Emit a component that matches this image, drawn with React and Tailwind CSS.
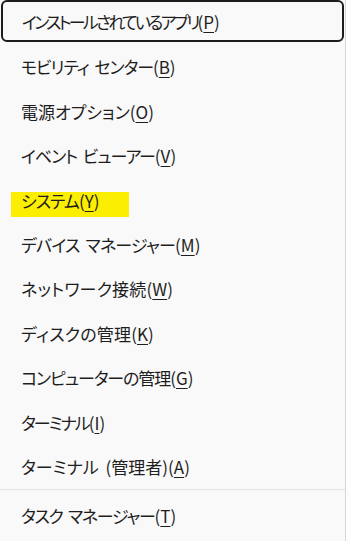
import React from 'react';

const items = [
  { label: 'インストールされているアプリ', key: 'P', focused: true, tracking: 'tracking-[-2.8px]' },
  { label: 'モビリティ センター', key: 'B', tracking: 'tracking-[-1.1px]' },
  { label: '電源オプション', key: 'O', tracking: 'tracking-normal' },
  { label: 'イベント ビューアー', key: 'V', tracking: 'tracking-[-1.1px]' },
  { label: 'システム', key: 'Y', marked: true, tracking: 'tracking-[-1px]' },
  { label: 'デバイス マネージャー', key: 'M', tracking: 'tracking-[-0.8px]' },
  { label: 'ネットワーク接続', key: 'W', tracking: 'tracking-[0.2px]' },
  { label: 'ディスクの管理', key: 'K', tracking: 'tracking-[0.2px]' },
  { label: 'コンピューターの管理', key: 'G', tracking: 'tracking-[-1.1px]' },
  { label: 'ターミナル', key: 'I', tracking: 'tracking-[-2px]' },
  { label: 'ターミナル (管理者)', key: 'A', tracking: 'tracking-normal' },
];

const Label = ({ label, hotkey, tracking }) => (
  <span className="relative whitespace-nowrap [word-spacing:3px]">
    <span className={tracking}>{label}</span>
    (<span className="underline decoration-1 underline-offset-[3px]">{hotkey}</span>)
  </span>
);

const MenuItem = ({ item }) => {
  if (item.focused) {
    return (
      <div className="h-[44.5px] pl-[1px] pr-[1px]">
        <div className="h-[42px] flex items-center pl-[19px] border-2 border-[#1c1c1c] rounded-[6px]">
          <Label label={item.label} hotkey={item.key} tracking={item.tracking} />
        </div>
      </div>
    );
  }

  return (
    <div className="relative h-[44.5px] flex items-center pl-[21px]">
      {item.marked && (
        <span className="absolute left-[11px] top-[14px] w-[118px] h-[25px] bg-[#fcee00]" />
      )}
      <Label label={item.label} hotkey={item.key} tracking={item.tracking} />
    </div>
  );
};

export default function App() {
  return (
    <div
      className="flex w-[350px] h-[541px] overflow-hidden bg-white text-[17px] leading-none text-[#1e1e1e] [font-feature-settings:'palt']"
      style={{ fontFamily: '"Noto Sans CJK JP", "Noto Sans", sans-serif' }}
    >
      <div className="w-[346px] h-full bg-[#f9f9f9] border-r border-[#d6d6d6] flex flex-col">
        {items.map((item) => (
          <MenuItem key={item.key} item={item} />
        ))}
        <div className="h-px bg-[#e3e3e3]" />
        <div className="h-[51px] flex items-center pl-[21px]">
          <Label label="タスク マネージャー" hotkey="T" tracking="tracking-[-1.3px]" />
        </div>
      </div>
      <div className="flex-1 bg-[#fdfdfd]" />
    </div>
  );
}
